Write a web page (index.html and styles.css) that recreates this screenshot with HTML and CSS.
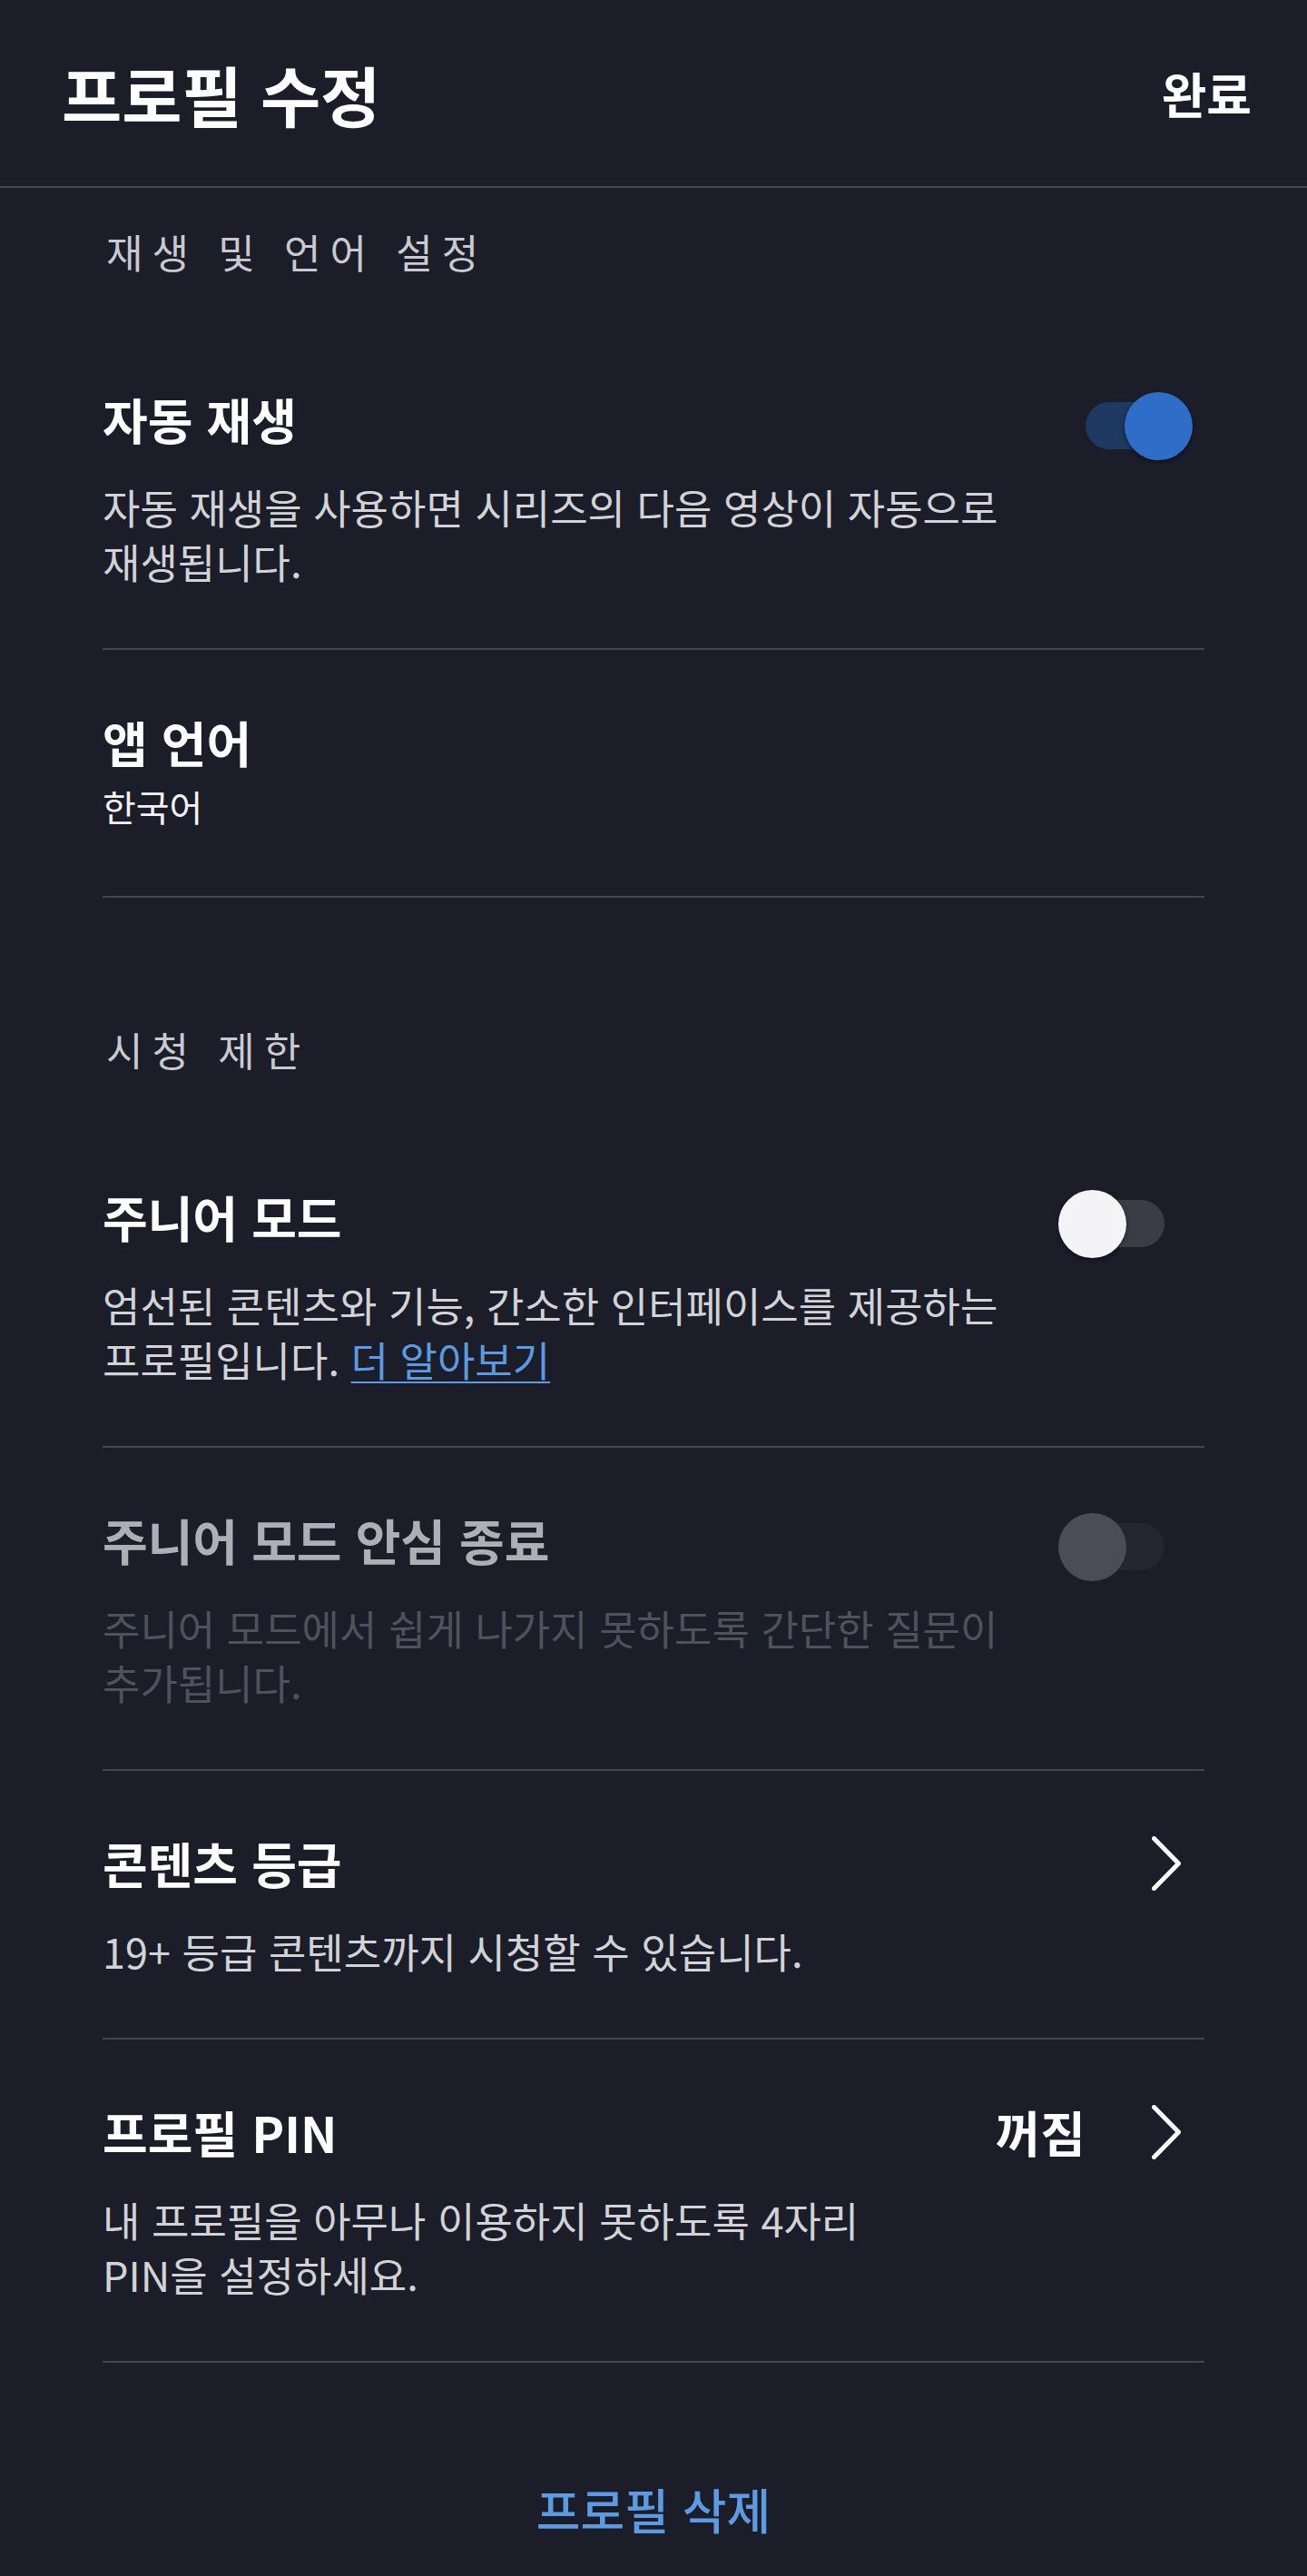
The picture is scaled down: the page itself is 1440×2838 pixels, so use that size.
FILE: index.html
```html
<!DOCTYPE html>
<html lang="ko">
<head>
<meta charset="utf-8">
<title>프로필 수정</title>
<link rel="stylesheet" href="styles.css">
</head>
<body>
<header class="header">
  <h1 class="header-title">프로필 수정</h1>
  <span class="header-action">완료</span>
</header>

<main class="content">
  <section class="section section-first">
    <h2 class="section-label">재생 및 언어 설정</h2>

    <div class="row">
      <div class="row-text">
        <div class="row-title">자동 재생</div>
        <p class="row-desc">자동 재생을 사용하면 시리즈의 다음 영상이 자동으로 재생됩니다.</p>
      </div>
      <div class="switch switch-on" role="switch" aria-checked="true">
        <span class="switch-track"></span>
        <span class="switch-knob"></span>
      </div>
    </div>

    <div class="row row-value">
      <div class="row-text">
        <div class="row-title">앱 언어</div>
        <div class="row-val">한국어</div>
      </div>
    </div>
  </section>

  <section class="section section-next">
    <h2 class="section-label">시청 제한</h2>

    <div class="row">
      <div class="row-text">
        <div class="row-title">주니어 모드</div>
        <p class="row-desc">엄선된 콘텐츠와 기능, 간소한 인터페이스를 제공하는 프로필입니다. <a class="link" href="#">더 알아보기</a></p>
      </div>
      <div class="switch switch-off" role="switch" aria-checked="false">
        <span class="switch-track"></span>
        <span class="switch-knob"></span>
      </div>
    </div>

    <div class="row row-disabled">
      <div class="row-text">
        <div class="row-title">주니어 모드 안심 종료</div>
        <p class="row-desc">주니어 모드에서 쉽게 나가지 못하도록 간단한 질문이 추가됩니다.</p>
      </div>
      <div class="switch switch-off switch-disabled" role="switch" aria-checked="false">
        <span class="switch-track"></span>
        <span class="switch-knob"></span>
      </div>
    </div>

    <div class="row">
      <div class="row-text">
        <div class="row-title">콘텐츠 등급</div>
        <p class="row-desc">19+ 등급 콘텐츠까지 시청할 수 있습니다.</p>
      </div>
      <div class="trail">
        <svg class="chevron" width="32" height="60" viewBox="0 0 32 60" aria-hidden="true">
          <path d="M2.5 2.5 L29.5 30 L2.5 57.5" fill="none" stroke="#ffffff" stroke-width="5" stroke-linecap="round" stroke-linejoin="round"/>
        </svg>
      </div>
    </div>

    <div class="row">
      <div class="row-text">
        <div class="row-title">프로필 PIN</div>
        <p class="row-desc">내 프로필을 아무나 이용하지 못하도록 4자리 PIN을 설정하세요.</p>
      </div>
      <div class="trail">
        <span class="trail-value">꺼짐</span>
        <svg class="chevron" width="32" height="60" viewBox="0 0 32 60" aria-hidden="true">
          <path d="M2.5 2.5 L29.5 30 L2.5 57.5" fill="none" stroke="#ffffff" stroke-width="5" stroke-linecap="round" stroke-linejoin="round"/>
        </svg>
      </div>
    </div>
  </section>

  <div class="delete-wrap">
    <button class="delete-btn" type="button">프로필 삭제</button>
  </div>
</main>
</body>
</html>
```

FILE: styles.css
```css
html {
  background: #1b1d28;
}

body {
  margin: 0;
  min-height: 2838px;
  background: #1b1d28;
  color: #ffffff;
  font-family: "Noto Sans CJK KR", "Noto Sans", sans-serif;
  word-break: keep-all;
}

.header {
  height: 205px;
  border-bottom: 2px solid #454752;
  display: flex;
  align-items: center;
  justify-content: space-between;
  padding: 0 61px 0 68px;
}

.header-title {
  margin: 0;
  font-size: 72px;
  line-height: 80px;
  font-weight: 700;
  color: #ffffff;
}

.header-action {
  font-size: 54px;
  line-height: 60px;
  font-weight: 700;
  color: #ffffff;
}

.content {
  padding: 0 113px;
}

.section-first {
  padding-top: 40px;
}

.section-next {
  padding-top: 137px;
}

.section-label {
  margin: 0;
  padding: 0 0 52px 4px;
  font-size: 44px;
  line-height: 61px;
  font-weight: 400;
  letter-spacing: 10px;
  color: #c9cad0;
}

.row {
  display: flex;
  align-items: flex-start;
  gap: 40px;
  padding: 72px 0 65px;
  border-bottom: 2px solid #43454f;
}

.row-value {
  padding-bottom: 74px;
}

.row-text {
  flex: 1;
  min-width: 0;
}

.row-title {
  font-size: 54px;
  line-height: 60px;
  font-weight: 700;
  color: #ffffff;
}

.row-desc {
  margin: 37px 0 0;
  font-size: 45px;
  line-height: 60px;
  font-weight: 400;
  color: #d2d3d7;
}

.row-val {
  margin-top: 15px;
  font-size: 40px;
  line-height: 50px;
  font-weight: 400;
  color: #f2f2f4;
}

.row-disabled .row-title {
  color: #aeafb5;
}

.row-disabled .row-desc {
  color: #4f515b;
}

.link {
  color: #5c9be2;
  text-decoration: underline;
  text-decoration-thickness: 2px;
  text-underline-offset: 5px;
}

/* switch */
.switch {
  position: relative;
  flex: none;
  width: 148px;
  height: 75px;
  margin-right: 13px;
}

.switch-track {
  position: absolute;
  left: 30px;
  top: 11px;
  width: 87px;
  height: 52px;
  border-radius: 26px;
  background: #3b3d46;
}

.switch-knob {
  position: absolute;
  top: 0;
  left: 0;
  width: 75px;
  height: 75px;
  border-radius: 50%;
  background: #f4f4f6;
  box-shadow: 0 2px 5px rgba(0, 0, 0, 0.45);
}

.switch-on .switch-track {
  background: #1e3a62;
}

.switch-on .switch-knob {
  left: 73px;
  background: #2e6ec8;
}

.switch-disabled .switch-track {
  background: #23252f;
}

.switch-disabled .switch-knob {
  background: #4a4c56;
  box-shadow: none;
}

/* trailing value + chevron */
.trail {
  flex: none;
  display: flex;
  align-items: center;
  gap: 73px;
  height: 60px;
  margin-right: 26px;
}

.trail-value {
  font-size: 54px;
  line-height: 60px;
  font-weight: 700;
  color: #ffffff;
}

.chevron {
  display: block;
}

.delete-wrap {
  display: flex;
  justify-content: center;
  padding-top: 131px;
}

.delete-btn {
  margin: 0;
  padding: 0;
  border: 0;
  background: none;
  font-family: inherit;
  font-size: 53px;
  line-height: 60px;
  font-weight: 500;
  color: #5c9be2;
}
```
